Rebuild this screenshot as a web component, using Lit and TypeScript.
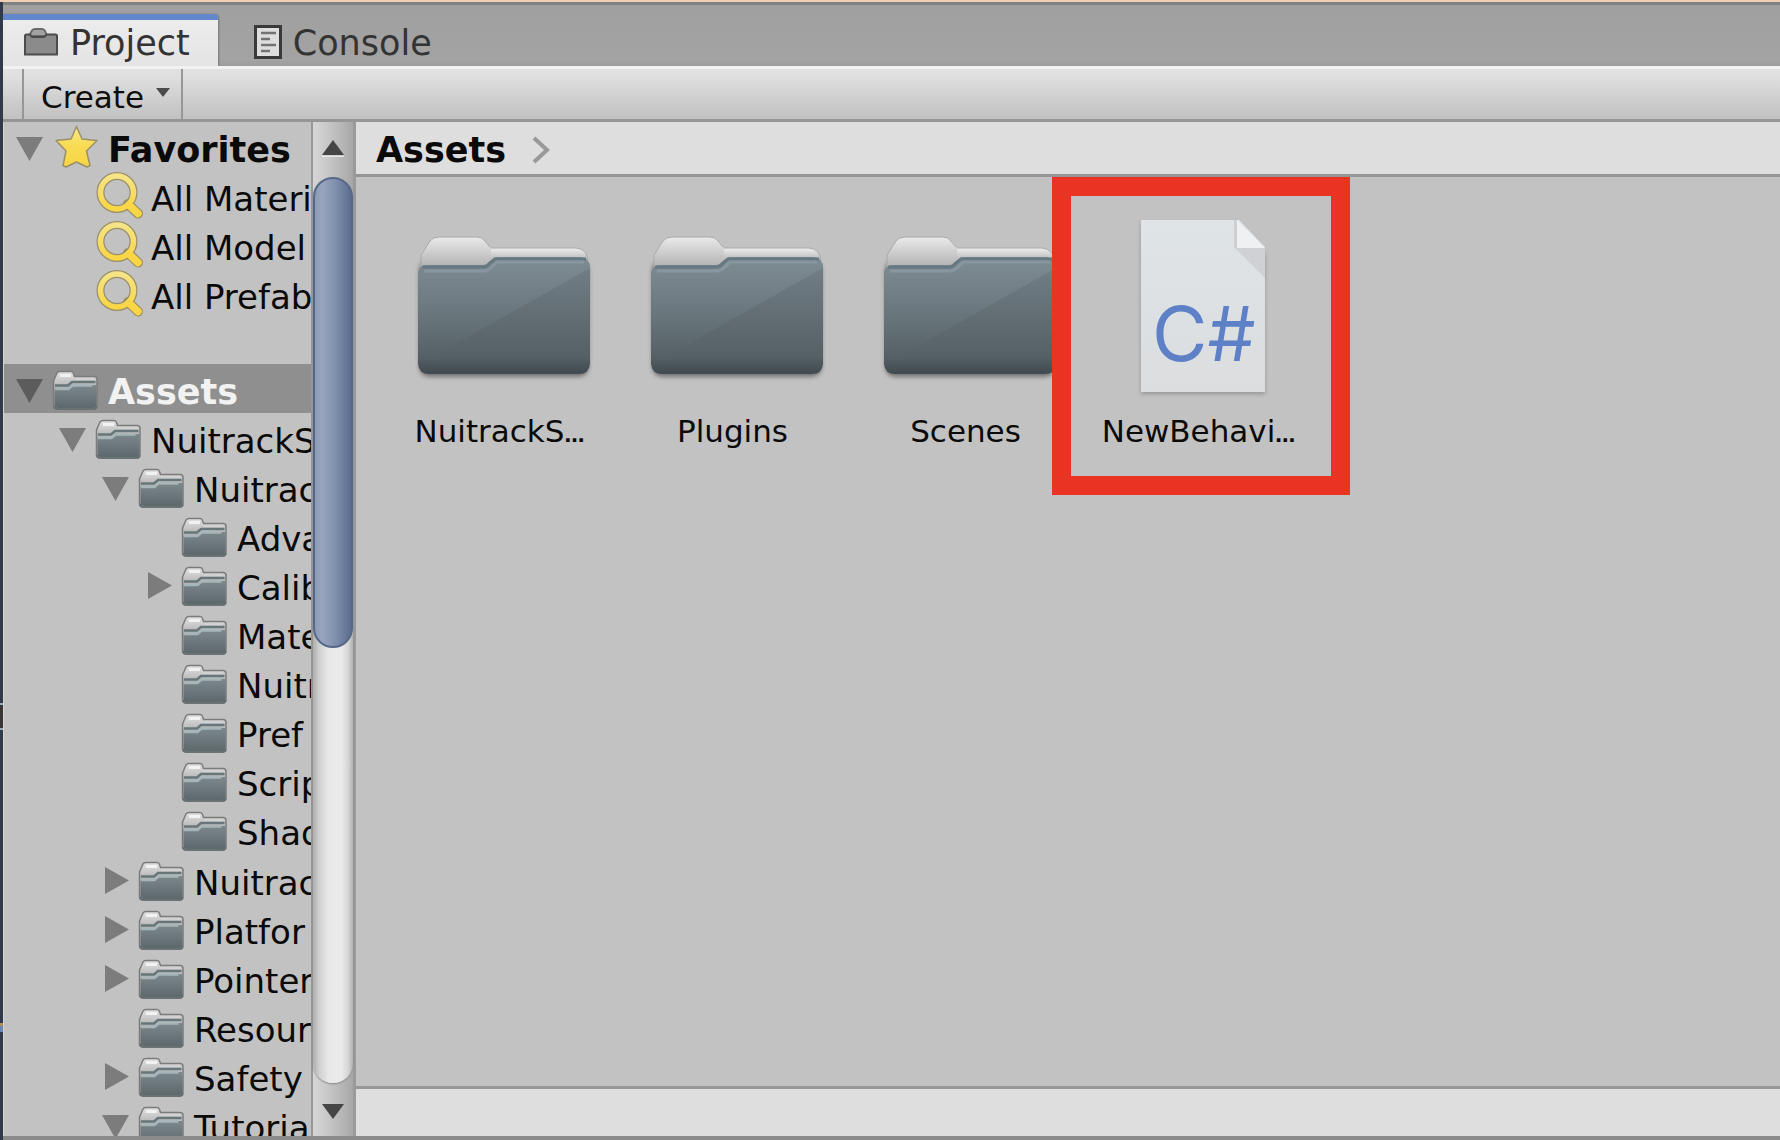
import { LitElement, html, svg, css, nothing } from "lit";
import { customElement, property, state } from "lit/decorators.js";

interface TreeNode {
  name: string;
  icon: "star" | "search" | "folder";
  open?: boolean;
  bold?: boolean;
  selected?: boolean;
  children?: TreeNode[];
}

interface Asset {
  name: string;
  kind: "folder" | "script";
  cut?: boolean;
  marked?: boolean;
}

const folder = (name: string, extra: Partial<TreeNode> = {}): TreeNode => ({
  name,
  icon: "folder",
  ...extra,
});
const search = (name: string): TreeNode => ({ name, icon: "search" });

const FAVORITES: TreeNode[] = [
  {
    name: "Favorites",
    icon: "star",
    bold: true,
    open: true,
    children: [search("All Materi"), search("All Model"), search("All Prefab")],
  },
];

const PROJECT: TreeNode[] = [
  folder("Assets", {
    bold: true,
    selected: true,
    open: true,
    children: [
      folder("NuitrackS", {
        open: true,
        children: [
          folder("Nuitrac", {
            open: true,
            children: [
              folder("Adva"),
              folder("Calib", { open: false }),
              folder("Mate"),
              folder("Nuitr"),
              folder("Pref"),
              folder("Scrip"),
              folder("Shad"),
            ],
          }),
          folder("Nuitrac", { open: false }),
          folder("Platfor", { open: false }),
          folder("Pointer", { open: false }),
          folder("Resour"),
          folder("Safety", { open: false }),
          folder("Tutoria", { open: true }),
        ],
      }),
    ],
  }),
];

const ASSETS: Asset[] = [
  { name: "NuitrackS", kind: "folder", cut: true },
  { name: "Plugins", kind: "folder" },
  { name: "Scenes", kind: "folder" },
  { name: "NewBehavi", kind: "script", cut: true, marked: true },
];

const starIcon = svg`
  <defs><linearGradient id="s" x2="0" y2="1"><stop offset="0" stop-color="#f8e98a"/><stop offset=".45" stop-color="#f9dc55"/><stop offset="1" stop-color="#f7d443"/></linearGradient></defs>
  <path d="M24.500 4.500L30 17l15 1.500L34.500 29l3.500 14.500-3 1.500-10.500-5-10.500 5-3-1.500L14 29 4 18.500 19 17Z" fill="url(#s)" stroke="#9a9068" stroke-width="1.500" stroke-linejoin="round"/>`;

const searchIcon = svg`
  <defs><linearGradient id="m" x2="0" y2="1"><stop offset="0" stop-color="#f6e486"/><stop offset="1" stop-color="#f8d646"/></linearGradient></defs>
  <path d="M33 33 43 42.500" stroke="#9a9068" stroke-width="10" stroke-linecap="round"/>
  <circle cx="22" cy="21.500" r="16.500" fill="none" stroke="#9a9068" stroke-width="8"/>
  <path d="M34 34 43 42.500" stroke="#f8d646" stroke-width="7.500" stroke-linecap="round"/>
  <circle cx="22" cy="21.500" r="16.500" fill="none" stroke="url(#m)" stroke-width="5.500"/>
  <path d="M32 32 36 36" stroke="#f8d646" stroke-width="5"/>`;

const folderIcon = svg`
  <defs>
    <linearGradient id="a" x2="0" y2="1"><stop offset="0" stop-color="#e2e2e2"/><stop offset=".4" stop-color="#b6b6b6"/><stop offset="1" stop-color="#ababab"/></linearGradient>
    <linearGradient id="b" x2="0" y2="1"><stop offset="0" stop-color="#7c888b"/><stop offset="1" stop-color="#5c686b"/></linearGradient>
  </defs>
  <path d="M1.500 17 5 9q1-1.500 3-1.500H19q2 0 2.500 2l1 3H42q3 0 3 3V42q0 3-3 3H5q-3.500 0-3.500-3Z" fill="url(#a)" stroke="#7b7b7b" stroke-width="1.500"/>
  <path d="M8 10H19V13H8Z" fill="#f2f2f2"/>
  <path d="M23 15H42" stroke="#d2d2d2" stroke-width="2"/>
  <path d="M2.500 25H16l4-4H44.500V41q0 3-3 3H6q-3.500 0-3.500-3Z" fill="url(#b)"/>
  <path d="M3 21.500H16l4-3.500H43.500" fill="none" stroke="#67767a" stroke-width="2.500"/>
  <path d="M3 25H16.500l4-3.500H40.500" fill="none" stroke="#a6b5b9" stroke-width="2.500"/>
  <path d="M2.500 42q0 3 3 3H41.500q3 0 3-3" fill="none" stroke="#626b6d" stroke-width="1.500"/>`;

const ICONS = { star: starIcon, search: searchIcon, folder: folderIcon };

const bigFolder = svg`
  <defs>
    <linearGradient id="tab" x2="0" y2="1"><stop offset="0" stop-color="#eaeaea"/><stop offset=".7" stop-color="#b2b2b2"/></linearGradient>
    <linearGradient id="back" x2="0" y2="1"><stop offset="0" stop-color="#eeeeee"/><stop offset=".4" stop-color="#b4b4b4"/></linearGradient>
    <linearGradient id="front" x2="0" y2="1"><stop offset="0" stop-color="#748188"/><stop offset=".85" stop-color="#566166"/><stop offset=".94" stop-color="#485257"/><stop offset="1" stop-color="#414a4f"/></linearGradient>
    <linearGradient id="gloss" x2="0" y2="1"><stop offset="0" stop-color="#93a3aa" stop-opacity=".32"/><stop offset="1" stop-color="#93a3aa" stop-opacity="0"/></linearGradient>
    <filter id="soft" x="-10%" y="-10%" width="120%" height="125%"><feGaussianBlur stdDeviation="2"/></filter>
  </defs>
  <rect x="1" y="40" width="170" height="117" rx="10" fill="#555" opacity=".7" filter="url(#soft)"/>
  <path d="M66 28H158Q168 29 169.500 38V60H60Z" fill="url(#back)" stroke="#aaa"/>
  <path d="M3 60V35L12 21Q15 17 21 17H59Q64 17 67 21L73 28V50L3 60Z" fill="url(#tab)"/>
  <path d="M3 50V35L12 21Q15 17 21 17H59Q64 17 67 21L72 27" fill="none" stroke="#a9a9a9"/>
  <path d="M0 55Q0 45 9 45H65Q69 45 71 42L76 38Q78 37 81 37H162Q172 38 172 48V144Q171 154 161 154H11Q1 154 0 144Z" fill="url(#front)"/>
  <path d="M0 55Q0 45 9 45H65Q69 45 71 42L76 38Q78 37 81 37H162Q172 38 172 48L16 136H0Z" fill="url(#gloss)"/>
  <path d="M4 47H65Q69 47 72 43L77 39H168" fill="none" stroke="#667982" stroke-width="3"/>
  <path d="M6 51H66Q70 51 74 47L79 42H166" fill="none" stroke="#8796a0" stroke-width="3"/>`;

const scriptDoc = svg`
  <defs>
    <linearGradient id="page" x2="0" y2="1"><stop offset="0" stop-color="#dfe4e7"/><stop offset=".6" stop-color="#dce0e2"/><stop offset="1" stop-color="#dcdddf"/></linearGradient>
    <filter id="drop" x="-10%" y="-10%" width="120%" height="120%"><feGaussianBlur stdDeviation="2"/></filter>
  </defs>
  <path d="M24 3H119L148 34V174H24Z" fill="#777" opacity=".6" filter="url(#drop)"/>
  <path d="M24 0H122L148 27V172H24Z" fill="url(#page)"/>
  <path d="M118 28L148 58V27Z" fill="#cfd1d5"/>
  <path d="M117 0H120V30L117 27Z" fill="#cfcfd2"/>
  <path d="M120 0 148 28H120Z" fill="#eff0f2"/>
  <text class="doc-text" x="35" y="141">C#</text>`;

@customElement("tree-row")
export class TreeRow extends LitElement {
  @property({ attribute: false }) node!: TreeNode;
  @property({ type: Number }) depth = 0;

  static styles = css`
    :host {
      display: block;
    }
    .row {
      display: flex;
      height: 49px;
      width: 100%;
      white-space: nowrap;
      color: #0a0a0a;
    }
    .selected {
      background: #8f8f8f;
      color: #f2f2f2;
    }
    .indent {
      flex: none;
      width: 43px;
    }
    .twist {
      flex: none;
      width: 49px;
      height: 49px;
      padding: 0;
      border: 0;
      background: none;
      color: #7c7c7c;
    }
    .selected .twist {
      color: #5c5c5c;
    }
    .icon {
      flex: none;
      width: 49px;
      height: 49px;
    }
    .twist svg {
      display: block;
      width: 49px;
      height: 49px;
    }
    .name {
      padding: 4px 0 0 7px;
      font-size: 34px;
      line-height: 49px;
    }
    .bold {
      font-size: 35px;
      font-weight: bold;
    }
    .children {
      margin: 0 0 1px;
      padding: 0;
      list-style: none;
    }
  `;

  render(): unknown {
    const n = this.node;
    const arrow = n.open
      ? svg`<path d="M13 15H40L26.500 39Z" fill="currentColor"/>`
      : svg`<path d="M16 12V39L40 25.500Z" fill="currentColor"/>`;
    return html`
      <div class="row ${n.selected ? "selected" : ""}">
        ${Array.from({ length: this.depth }, () => html`<span class="indent"></span>`)}
        ${n.open === undefined
          ? html`<span class="twist"></span>`
          : html`<button class="twist" aria-label=${n.name} aria-expanded=${n.open ? "true" : "false"}>
              <svg viewBox="0 0 49 49">${arrow}</svg>
            </button>`}
        <svg class="icon" viewBox="0 0 49 49">${ICONS[n.icon]}</svg>
        <span class="name ${n.bold ? "bold" : ""}">${n.name}</span>
      </div>
      ${n.children
        ? html`<ul class="children">
            ${n.children.map(
              (c) => html`<li><tree-row .node=${c} .depth=${this.depth + 1}></tree-row></li>`
            )}
          </ul>`
        : nothing}
    `;
  }
}

@customElement("asset-tile")
export class AssetTile extends LitElement {
  @property({ attribute: false }) asset!: Asset;

  static styles = css`
    :host {
      display: block;
      position: relative;
    }
    .tile {
      display: flex;
      flex-direction: column;
      align-items: center;
      width: 100%;
      padding: 0;
      border: 0;
      background: none;
      font: inherit;
      color: #0a0a0a;
    }
    .art {
      display: block;
      width: 172px;
      height: 172px;
      overflow: visible;
    }
    .doc-text {
      font-family: Inter, "Liberation Sans", sans-serif;
      font-size: 76px;
      fill: #5d80c6;
    }
    .label {
      padding: 20px 8px 0 0;
      font-size: 31px;
      line-height: 38px;
      white-space: nowrap;
    }
    .dots {
      font-size: 20px;
      font-weight: bold;
    }
    .frame {
      position: absolute;
      inset: -43px -31px -41px -34px;
      border: 19px solid #eb3323;
      pointer-events: none;
    }
  `;

  render() {
    const a = this.asset;
    return html`
      <button class="tile">
        <svg class="art" viewBox="0 0 172 172">${a.kind === "folder" ? bigFolder : scriptDoc}</svg>
        <span class="label">${a.name}${a.cut ? html`<span class="dots">…</span>` : nothing}</span>
      </button>
      ${a.marked ? html`<div class="frame"></div>` : nothing}
    `;
  }
}

@customElement("app-root")
export class AppRoot extends LitElement {
  @state() private tab = "Project";

  static styles = css`
    :host {
      display: block;
      font-family: "DejaVu Sans", Verdana, sans-serif;
    }
    * {
      box-sizing: border-box;
    }
    button {
      font: inherit;
      color: inherit;
      padding: 0;
      border: 0;
      background: none;
    }
    .window {
      display: flex;
      flex-direction: column;
      height: 100vh;
      overflow: hidden;
      border-top: 2px solid #f0cfb6;
      background: #c2c2c2;
    }
    .main {
      flex: 1;
      min-height: 0;
      display: grid;
      grid-template-columns: 3px minmax(0, 1fr);
    }
    .edge {
      background: linear-gradient(
        #303a4a 0 701px,
        #9aabba 701px 703px,
        #3a3434 703px 726px,
        #9aabba 726px 728px,
        #303a4a 728px 1021px,
        #b08d58 1021px 1024px,
        #6c86b4 1024px 1030px,
        #303a4a 1030px
      );
    }
    .panel {
      display: flex;
      flex-direction: column;
      min-width: 0;
      min-height: 0;
      border-bottom: 4px solid #8b8b8b;
    }
    .tabs {
      flex: none;
      display: flex;
      height: 64px;
      padding-top: 9px;
      border-top: 3px solid #828282;
      background: linear-gradient(#a0a0a0, #a3a3a3 90%, #9c9c9c);
    }
    .tab {
      display: flex;
      align-items: center;
      gap: 11px;
      padding: 0 28px 0 20px;
      border-top: 6px solid transparent;
      font-size: 35px;
      line-height: 40px;
      color: #333;
    }
    .tab.active {
      border-top-color: #6288cb;
      border-radius: 0 4px 0 0;
      background: linear-gradient(#ececec, #e4e4e4);
      box-shadow: 1px 0 2px #777;
    }
    .tab.other {
      padding-left: 36px;
    }
    .tab svg {
      display: block;
      width: 36px;
      height: 36px;
    }
    .tab.other svg {
      width: 28px;
    }
    .toolbar {
      flex: none;
      display: flex;
      height: 56px;
      padding-left: 19px;
      border-top: 3px solid #f2f2f2;
      border-bottom: 3px solid #969696;
      background: linear-gradient(#e2e2e2, #dddddd 20%, #c1c1c1);
    }
    .create {
      display: flex;
      align-items: center;
      gap: 12px;
      padding: 5px 11px 0 17px;
      border-left: 2px solid #979797;
      border-right: 2px solid #979797;
      font-size: 31px;
      line-height: 40px;
      color: #0d0d0d;
    }
    .create svg {
      width: 14px;
      height: 26px;
    }
    .body {
      flex: 1;
      min-height: 0;
      display: grid;
      grid-template-columns: 308px 45px minmax(0, 1fr);
    }
    .tree {
      min-height: 0;
      overflow: hidden;
      border-left: 1px solid #d4d4d4;
    }
    .second {
      margin-top: 46px;
    }
    .tree tree-row {
      margin-left: -1px;
    }
    .scroll {
      display: flex;
      flex-direction: column;
      min-height: 0;
      padding-top: 2px;
      border-left: 2px solid #979797;
      border-right: 3px solid #9a9a9a;
      background: linear-gradient(90deg, #d6d6d6, #cbcbcb 30%, #b2b2b2 80%, #a6a6a6);
    }
    .step {
      flex: none;
      height: 53px;
      width: 100%;
    }
    .step svg {
      display: block;
      margin: 0 auto;
      width: 40px;
      height: 53px;
    }
    .track {
      flex: 1;
      min-height: 0;
      border-radius: 20px;
      background: linear-gradient(90deg, #adadad, #cfcfcf 15%, #e8e8e8 38%, #ebebeb 70%, #d6d6d6 88%, #b0b0b0);
      box-shadow: 0 1px 2px #888;
    }
    .thumb {
      height: 52%;
      border: 2px solid #566888;
      border-radius: 20px;
      background: linear-gradient(90deg, #8b9bb5, #98a6bd 20%, #7d8dab 60%, #5f7092 95%);
    }
    .content {
      display: flex;
      flex-direction: column;
      min-width: 0;
      min-height: 0;
    }
    .crumbs {
      flex: none;
      display: flex;
      align-items: center;
      gap: 25px;
      height: 55px;
      padding: 3px 20px 0;
      border-bottom: 3px solid #959595;
      background: #dedede;
      font-size: 35px;
      line-height: 40px;
      font-weight: bold;
      color: #0a0a0a;
    }
    .crumbs a {
      color: inherit;
      text-decoration: none;
    }
    .crumbs svg {
      width: 20px;
      height: 28px;
    }
    .grid {
      flex: 1;
      min-height: 0;
      display: grid;
      grid-template-columns: repeat(auto-fill, 233px);
      align-content: start;
      margin: 0;
      padding: 43px 31px;
      list-style: none;
    }
    .status {
      flex: none;
      height: 50px;
      border-top: 3px solid #989898;
      background: #dedede;
    }
  `;

  private tabClass(name: string) {
    return this.tab === name ? "tab active" : "tab other";
  }

  render() {
    return html`
      <div class="window">
        <div class="main">
          <div class="edge"></div>
          <section class="panel">
            <nav class="tabs">
              <button class=${this.tabClass("Project")} @click=${() => (this.tab = "Project")}>
                <svg viewBox="0 0 36 36">
                  <path d="M6 11 9 5.500Q10 4 12 4H19Q21 4 22 6L24 11Z" fill="#a2a2a2" stroke="#6b6b6b" stroke-width="2" />
                  <path d="M2 11Q2 9.500 3.500 9.500H7L9 12H21L24 9.500H32.500Q34 9.500 34 11V29.500H2Z" fill="#8b8b8b" stroke="#4b4b4b" stroke-width="2" />
                </svg>
                Project
              </button>
              <button class=${this.tabClass("Console")} @click=${() => (this.tab = "Console")}>
                <svg viewBox="0 0 28 36">
                  <path d="M1.500 1.500H26.500V32.500H1.500Z" fill="#dedede" stroke="#3a3a3a" stroke-width="3" />
                  <path d="M7 8H22M7 14H16M7 20H22M7 26H16" stroke="#737373" stroke-width="2.500" />
                </svg>
                Console
              </button>
            </nav>
            <div class="toolbar">
              <button class="create" aria-haspopup="menu">
                Create
                <svg viewBox="0 0 14 26"><path d="M0 4H14L7 13Z" fill="#4b4b4b" /></svg>
              </button>
            </div>
            <div class="body">
              <aside class="tree">
                ${FAVORITES.map((n) => html`<tree-row .node=${n}></tree-row>`)}
                <div class="second">${PROJECT.map((n) => html`<tree-row .node=${n}></tree-row>`)}</div>
              </aside>
              <div class="scroll">
                <button class="step" aria-label="Scroll up">
                  <svg viewBox="0 0 40 53">
                    <path d="M9 31.500H31V33H9Z" fill="#e6e6e6" />
                    <path d="M20 16 31 31H9Z" fill="#454545" />
                  </svg>
                </button>
                <div class="track"><div class="thumb"></div></div>
                <button class="step" aria-label="Scroll down">
                  <svg viewBox="0 0 40 53"><path d="M9 21H31L20 36Z" fill="#454545" /></svg>
                </button>
              </div>
              <section class="content">
                <nav class="crumbs">
                  <a href="#assets">Assets</a>
                  <svg viewBox="0 0 20 28"><path d="M3 2 16 14 3 26" fill="none" stroke="#999" stroke-width="4" /></svg>
                </nav>
                <ul class="grid">
                  ${ASSETS.map((a) => html`<li><asset-tile .asset=${a}></asset-tile></li>`)}
                </ul>
                <footer class="status"></footer>
              </section>
            </div>
          </section>
        </div>
      </div>
    `;
  }
}
